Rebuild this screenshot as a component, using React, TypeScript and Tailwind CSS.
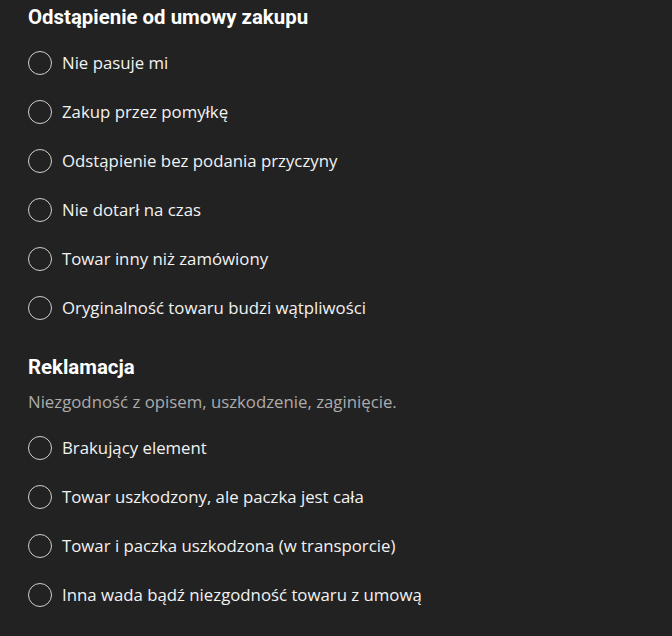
import React from "react";

const Radio = ({ label }: { label: string }) => (
  <label className="flex h-[49px] items-center cursor-pointer">
    <span className="block w-[24px] h-[24px] rounded-full border-[1.5px] border-[#cfcfcf] shrink-0" />
    <span className="ml-[10px] text-[16.8px] text-[#f2f2f2] leading-[24px]" style={{ fontFamily: '"Open Sans", sans-serif' }}>
      {label}
    </span>
  </label>
);

export default function App() {
  const a = [
    "Nie pasuje mi",
    "Zakup przez pomyłkę",
    "Odstąpienie bez podania przyczyny",
    "Nie dotarł na czas",
    "Towar inny niż zamówiony",
    "Oryginalność towaru budzi wątpliwości",
  ];
  const b = [
    "Brakujący element",
    "Towar uszkodzony, ale paczka jest cała",
    "Towar i paczka uszkodzona (w transporcie)",
    "Inna wada bądź niezgodność towaru z umową",
  ];
  return (
    <div className="w-[672px] h-[636px] bg-[#222222] pl-[28px] overflow-hidden">
      <h2
        className="h-[34px] flex items-center text-[20.4px] font-bold text-white"
        style={{ fontFamily: "Roboto, sans-serif" }}
      >
        Odstąpienie od umowy zakupu
      </h2>
      <div className="mt-[4px] flex flex-col">
        {a.map((t) => (
          <Radio key={t} label={t} />
        ))}
      </div>
      <h2
        className="mt-[18px] h-[34px] flex items-center text-[20.4px] font-bold text-white"
        style={{ fontFamily: "Roboto, sans-serif" }}
      >
        Reklamacja
      </h2>
      <p
        className="mt-[6px] text-[16.8px] leading-[24px] text-[#ababab]"
        style={{ fontFamily: '"Open Sans", sans-serif' }}
      >
        Niezgodność z opisem, uszkodzenie, zaginięcie.
      </p>
      <div className="mt-[9px] flex flex-col">
        {b.map((t) => (
          <Radio key={t} label={t} />
        ))}
      </div>
    </div>
  );
}
